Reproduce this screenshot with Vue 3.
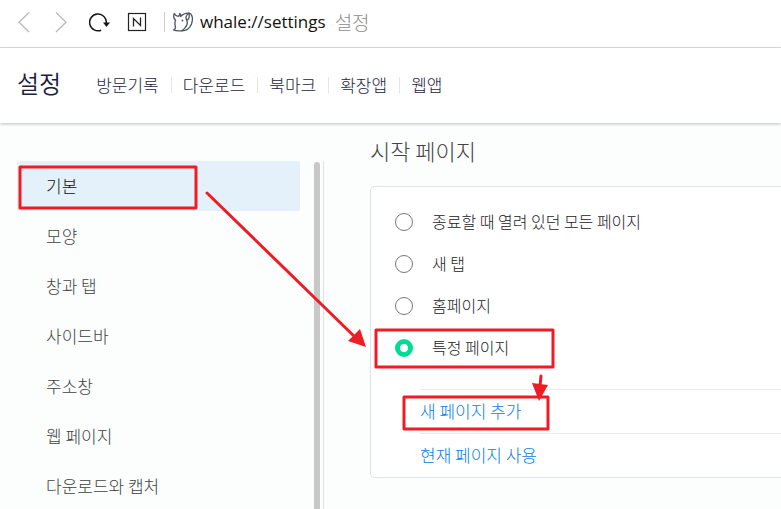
<script setup>
import { ref } from 'vue'

const tabs = ['방문기록', '다운로드', '북마크', '확장앱', '웹앱']
const sections = ['기본', '모양', '창과 탭', '사이드바', '주소창', '웹 페이지', '다운로드와 캡처']
const options = ['종료할 때 열려 있던 모든 페이지', '새 탭', '홈페이지', '특정 페이지']
const current = ref('기본')
const startup = ref('특정 페이지')
</script>

<template>
  <div class="page">
    <div class="toolbar">
      <button class="tool" aria-label="뒤로">
        <svg width="14" height="22" viewBox="0 0 14 22"><path d="M12 1.5 2 11.3 12 21" fill="none" stroke="#b9b9b9" stroke-width="1.3" /></svg>
      </button>
      <button class="tool" aria-label="앞으로">
        <svg width="14" height="22" viewBox="0 0 14 22"><path d="M3 1.5 13 11.3 3 21" fill="none" stroke="#b9b9b9" stroke-width="1.3" /></svg>
      </button>
      <button class="tool" aria-label="새로고침">
        <svg width="22" height="22" viewBox="0 0 22 22">
          <path d="M12.2 19.2A8.400 8.400 0 1 1 17.400 12" fill="none" stroke="#151515" stroke-width="1.5" />
          <path d="M14 11.500h7L17.500 16z" fill="#151515" />
        </svg>
      </button>
      <button class="tool" aria-label="네이버">
        <svg width="20" height="22" viewBox="0 0 20 22">
          <rect x="1.5" y="2.5" width="17" height="17" fill="none" stroke="#222" stroke-width="1.2" />
          <path d="M6.500 15.500V7.500l7 7V6.500" fill="none" stroke="#222" stroke-width="1.3" />
        </svg>
      </button>
      <span class="rule"></span>
      <div class="address">
        <svg width="22" height="20" viewBox="0 0 22 20" fill="none" stroke="#4d545c" stroke-width="1.3" stroke-linejoin="round" stroke-linecap="round">
          <path d="M8.500 4.500C11 2 14 .8 17 1.200C20.500 2 21.300 7 19.500 12C17.500 17 13.500 19 9 18.800C6 19 3.500 19 1.500 18C3.300 17.300 3.800 16 3.300 14.200C2.600 12 2.800 10 3.600 8.200C1.500 6.500 1.300 4 2.300 1.500C3.300 3.500 4.500 4.300 6.200 4.400C7.200 3.800 7.600 2.800 7.800 1.500C8.800 2.300 9 3.300 8.500 4.500" />
          <path d="M17 1.200C13.500 3.500 13.200 6 15 8.500C16.200 12 13.500 16 10 18.800M15 8.500C17 7.200 17.600 4.500 17 1.200" />
          <circle cx="10.500" cy="8.500" r=".9" fill="#4d545c" stroke="none" />
        </svg>
        <span class="url">whale://settings</span>
        <span class="url-title">설정</span>
      </div>
    </div>

    <header class="header">
      <h1>설정</h1>
      <nav class="tabs">
        <a v-for="tab in tabs" :key="tab" href="#">{{ tab }}</a>
      </nav>
    </header>

    <div class="body">
      <aside class="side">
        <nav class="sections">
          <a v-for="s in sections" :key="s" href="#" :class="{ active: s === current }" @click.prevent="current = s">{{ s }}</a>
        </nav>
        <div class="scroll"></div>
      </aside>
      <main class="main">
        <h2>시작 페이지</h2>
        <div class="card">
          <div class="options">
            <label v-for="o in options" :key="o" class="option">
              <input v-model="startup" type="radio" name="startup" :value="o" />
              <span>{{ o }}</span>
            </label>
          </div>
          <div class="actions">
            <a href="#">새 페이지 추가</a>
            <a href="#">현재 페이지 사용</a>
          </div>
        </div>
      </main>
    </div>

    <svg class="marks" width="781" height="509" viewBox="0 0 781 509" fill="none" stroke="#ee1c25" stroke-width="3" stroke-linejoin="round" stroke-linecap="round">
      <rect x="20" y="167" width="176" height="41" />
      <rect x="376" y="330" width="177" height="37" />
      <rect x="404" y="397" width="144" height="32" />
      <path d="M207 193 356 338M541 376 540 386" />
      <path d="M366 347 348 341 360 329zM539 401 532 383 548 385z" fill="#ee1c25" stroke="none" />
    </svg>
  </div>
</template>

<style>
body {
  margin: 0;
}
</style>

<style scoped>
.page {
  position: relative;
  display: flex;
  flex-direction: column;
  height: 100vh;
  overflow: hidden;
  background: #fcfefe;
  color: #444;
  font-family: "Noto Sans CJK KR", sans-serif;
  font-size: 17px;
  font-weight: 300;
  line-height: 24px;
}
a {
  color: inherit;
  text-decoration: none;
}
svg {
  display: block;
}
.toolbar {
  display: flex;
  flex: none;
  align-items: center;
  height: 43px;
  padding: 0 17px 4px;
  border-bottom: 1px solid #dedede;
  background: #fff;
}
.tool {
  padding: 0;
  margin-right: 22px;
  border: 0;
  background: none;
}
.tool:nth-child(3),
.tool:nth-child(4) {
  margin-right: 16px;
}
.rule {
  width: 1px;
  height: 20px;
  margin-left: 1px;
  background: #ccc;
}
.address {
  display: flex;
  align-items: center;
  margin-left: 7px;
}
.url {
  margin-left: 6px;
  color: #111;
  font-family: "Open Sans", sans-serif;
  font-size: 17px;
  font-weight: 400;
}
.url-title {
  margin-left: 9px;
  color: #8c8c8c;
  font-size: 19px;
}
.header {
  display: flex;
  flex: none;
  align-items: center;
  height: 73px;
  padding: 0 17px 2px;
  background: #fff;
  box-shadow: 0 1px 3px rgba(0, 0, 0, 0.25);
  color: #1d1d3f;
}
h1,
h2 {
  margin: 0;
  font-weight: inherit;
}
h1 {
  padding-bottom: 4px;
  font-size: 24px;
  font-weight: 350;
}
.tabs {
  display: flex;
  align-items: center;
  margin-left: 35px;
}
.tabs a {
  display: flex;
  align-items: center;
}
.tabs a + a::before {
  content: "";
  width: 1px;
  height: 16px;
  margin: 0 11px 0 12px;
  background: #e4e4e8;
}
.body {
  display: flex;
  flex: 1;
  min-height: 0;
}
.side {
  display: flex;
  flex: none;
  margin: 38px 0 0 17px;
  border-right: 1px solid #e0e0e2;
}
.sections {
  width: 283px;
}
.sections a {
  display: block;
  padding: 13px 29px;
  color: #42423e;
}
.sections .active {
  border-radius: 2px;
  background: #e4f0fa;
  color: #111;
}
.scroll {
  width: 6px;
  margin: 1px 3px 0 14px;
  border-radius: 3px 3px 0 0;
  background: #c8c8c8;
}
.main {
  flex: 1;
  padding: 12px 0 0 46px;
}
h2 {
  font-size: 22px;
  line-height: 30px;
}
.card {
  margin-top: 21px;
  border: 1px solid #dbe3ec;
  border-right: 0;
  border-radius: 5px 0 0 5px;
  background: #fff;
}
.options {
  padding: 14px 24px 20px;
}
.option {
  display: flex;
  align-items: center;
  height: 42px;
  color: #222;
  font-size: 16px;
}
.option span {
  padding-bottom: 2px;
}
input {
  flex: none;
  width: 18px;
  height: 18px;
  margin: 0 19px 0 0;
  border: 1px solid #777;
  border-radius: 50%;
  background: #fff;
  appearance: none;
}
input:checked {
  border: 5px solid #00dc96;
}
.actions {
  padding-left: 49px;
}
.actions a {
  display: block;
  padding: 9px 0 10px;
  border-top: 1px solid #eaecee;
  color: #0a80ea;
}
.marks {
  position: absolute;
  top: 0;
  left: 0;
  pointer-events: none;
}
</style>
